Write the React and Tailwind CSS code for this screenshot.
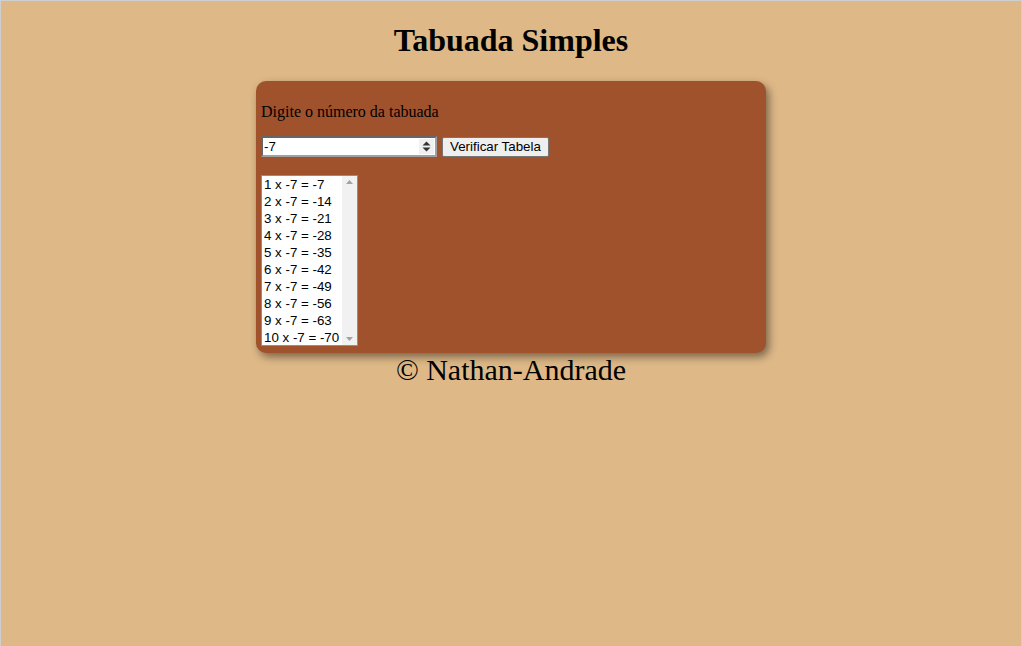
export default function App() {
  const numero = -7;
  const linhas = Array.from({ length: 10 }, (_, i) => `${i + 1} x ${numero} = ${(i + 1) * numero}`);

  return (
    <div className="h-[646px] bg-[#deb887] border-x border-t border-[#cfcfcf] font-['Liberation_Serif',serif] text-black">
      <h1 className="text-center text-[32px] font-bold leading-[37px] pt-[21px] mb-[22px]">Tabuada Simples</h1>

      {/* Card */}
      <div className="mx-auto w-[510px] bg-[#a0522d] rounded-[10px] pt-[5px] px-[5px] pb-[7px] shadow-[3px_4px_8px_rgba(0,0,0,0.45)]">
        <p className="text-base leading-[18px] mt-[17px] mb-[15px]">Digite o número da tabuada</p>

        <div className="flex items-center gap-[5px] h-[21px]">
          <div className="relative w-[176px] h-[21px] bg-white border-2 border-[#666] border-r-[#a0a0a0] border-b-[#a0a0a0]">
            <input
              type="text"
              defaultValue={numero}
              className="block w-full h-[17px] px-[1px] py-0 text-[13.33px] leading-[15px] font-['Liberation_Sans',sans-serif] outline-none"
            />
            <div className="absolute right-[1px] top-[1px] w-[15px] h-[15px] bg-[#f0f0f0] flex flex-col items-center justify-center gap-[1px]">
              <svg width="9" height="5" viewBox="0 0 9 5"><path d="M0.5 4.5 L4.5 0.5 L8.5 4.5 Z" fill="#333" /></svg>
              <svg width="9" height="5" viewBox="0 0 9 5"><path d="M0.5 0.5 L4.5 4.5 L8.5 0.5 Z" fill="#333" /></svg>
            </div>
          </div>
          <button className="h-[20px] px-[7px] bg-[#efefef] border border-[#767676] rounded-[2px] text-[13.33px] leading-none font-['Liberation_Sans',sans-serif]">
            Verificar Tabela
          </button>
        </div>

        {/* Listbox */}
        <div className="mt-[18px] flex w-[97px] h-[171px] bg-white border border-[#8f8f8f] font-['Liberation_Sans',sans-serif] text-[13.33px]">
          <div className="flex-1 flex flex-col">
            {linhas.map((l) => (
              <div key={l} className="h-[17px] leading-[17px] pl-[2px] whitespace-nowrap">{l}</div>
            ))}
          </div>
          <div className="w-[15px] bg-[#f1f1f1] flex flex-col justify-between items-center py-[4px]">
            <svg width="7" height="4" viewBox="0 0 7 4"><path d="M0 4 L3.5 0 L7 4 Z" fill="#a3a3a3" /></svg>
            <svg width="7" height="4" viewBox="0 0 7 4"><path d="M0 0 L3.5 4 L7 0 Z" fill="#a3a3a3" /></svg>
          </div>
        </div>
      </div>

      <footer className="text-center text-[30px] leading-[34px]">© Nathan-Andrade</footer>
    </div>
  );
}
